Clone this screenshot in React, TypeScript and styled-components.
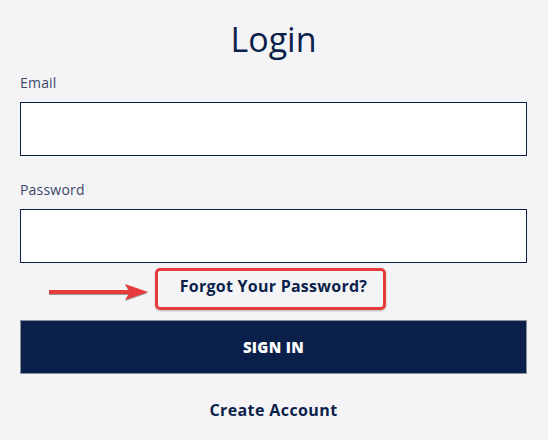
import styled, { createGlobalStyle } from 'styled-components';

const NAVY = '#0b1f4b';

const GlobalStyle = createGlobalStyle`
  body {
    margin: 0;
    background: #f4f4f7;
    font-family: "Open Sans", "Liberation Sans", sans-serif;
    color: ${NAVY};
  }
`;

export default function App() {
  return (
    <>
      <GlobalStyle />
      <St.Page>
        <St.Title>Login</St.Title>

        <St.Field>
          <St.Label htmlFor="email">Email</St.Label>
          <St.Input id="email" type="email" />
        </St.Field>

        <St.Field $gap={24}>
          <St.Label htmlFor="password">Password</St.Label>
          <St.Input id="password" type="password" />
        </St.Field>

        <St.ForgotRow>
          <St.Arrow width="100" height="20" viewBox="0 0 100 20">
            <line x1="0" y1="8" x2="82" y2="8" stroke="#e63b3b" strokeWidth="4" />
            <polygon points="76,0 99,8 76,16 81,8" fill="#e63b3b" />
          </St.Arrow>
          <St.Highlight>
            <St.ForgotLink href="#">Forgot Your Password?</St.ForgotLink>
          </St.Highlight>
        </St.ForgotRow>

        <St.SignInButton type="button">SIGN IN</St.SignInButton>

        <St.CreateLink href="#">Create Account</St.CreateLink>
      </St.Page>
    </>
  );
}

const St = {
  Page: styled.div`
    display: flex;
    flex-direction: column;
    padding: 19px 21px 0 20px;
  `,
  Title: styled.h1`
    margin: 0;
    text-align: center;
    font-size: 34px;
    line-height: 40px;
    font-weight: 400;
    color: ${NAVY};
  `,
  Field: styled.div<{ $gap?: number }>`
    display: flex;
    flex-direction: column;
    gap: 9px;
    margin-top: ${({ $gap }) => $gap ?? 14}px;
  `,
  Label: styled.label`
    font-size: 14px;
    line-height: 20px;
    letter-spacing: 0.2px;
    color: #3d4767;
  `,
  Input: styled.input`
    box-sizing: border-box;
    width: 100%;
    height: 54px;
    margin: 0;
    border: 1px solid ${NAVY};
    border-radius: 0;
    background: #fff;
    outline: none;
  `,
  ForgotRow: styled.div`
    position: relative;
    display: flex;
    justify-content: center;
    margin-top: 5px;
  `,
  Arrow: styled.svg`
    position: absolute;
    left: 29px;
    top: 16px;
    filter: drop-shadow(0 1.5px 0.5px rgba(80, 80, 80, 0.55));
  `,
  Highlight: styled.span`
    display: inline-block;
    margin-left: -6px;
    padding: 5px 16px 11px 22px;
    border: 3px solid #e63b3b;
    border-radius: 5px;
    box-shadow: 0 1px 2px rgba(0, 0, 0, 0.25);
  `,
  ForgotLink: styled.a`
    display: block;
    font-size: 16px;
    line-height: 20px;
    font-weight: 700;
    letter-spacing: 0.25px;
    color: ${NAVY};
    text-decoration: none;
  `,
  SignInButton: styled.button`
    box-sizing: border-box;
    height: 54px;
    margin-top: 10px;
    border: 1px solid #8b909e;
    background: ${NAVY};
    color: #fff;
    font-family: inherit;
    font-size: 15px;
    font-weight: 800;
    letter-spacing: 0.3px;
    cursor: pointer;
  `,
  CreateLink: styled.a`
    margin-top: 26px;
    text-align: center;
    font-size: 16px;
    line-height: 20px;
    font-weight: 700;
    letter-spacing: 0.4px;
    color: ${NAVY};
    text-decoration: none;
  `,
};
